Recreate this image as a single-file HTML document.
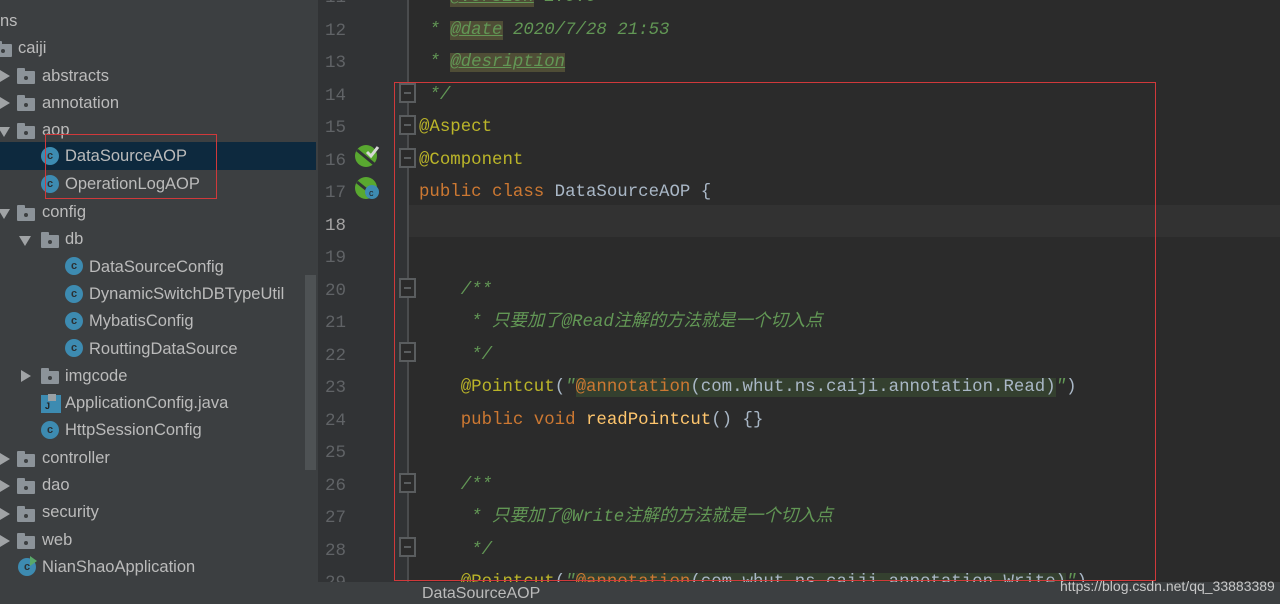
<!DOCTYPE html>
<html><head><meta charset="utf-8"><style>
*{margin:0;padding:0;box-sizing:border-box}
body{width:1280px;height:604px;overflow:hidden;background:#2b2b2b;position:relative;font-family:"Liberation Sans","Noto Sans CJK SC",sans-serif}
#side{position:absolute;left:0;top:0;width:318px;height:604px;background:#3c3f41}
.r{position:absolute;height:27px;line-height:27px;font-size:16.5px;color:#bbbbbb;white-space:nowrap}
.sel{position:absolute;left:0;top:142px;width:316px;height:28px;background:#0d293e}
.fold{position:absolute;width:18px;height:13px;background:#8c9399;border-radius:1px}
.fold:before{content:"";position:absolute;left:0;top:-3px;width:8px;height:4px;background:#8c9399;border-radius:1px 1px 0 0}
.fold:after{content:"";position:absolute;left:7px;top:5px;width:4px;height:4px;background:#3c3f41;border-radius:50%}
.arr{position:absolute;width:0;height:0}
.ar{border-top:6px solid transparent;border-bottom:6px solid transparent;border-left:10px solid #a0a3a5}
.ad{border-left:6px solid transparent;border-right:6px solid transparent;border-top:10px solid #a0a3a5}
.ci{position:absolute;width:18px;height:18px;border-radius:50%;background:#3d8bb1;color:#2b3033;font-size:11px;line-height:18px;text-align:center;font-weight:bold}
#gut{position:absolute;left:318px;top:0;width:90px;height:582px;background:#313335}
.ln{position:absolute;left:318px;width:28px;text-align:right;font-family:"Liberation Mono",monospace;font-size:17.5px;color:#606366;height:32.5px;line-height:32.5px}
.cl{position:absolute;left:419px;height:32.5px;line-height:32.5px;font-family:"Liberation Mono","Noto Sans CJK SC",monospace;font-size:17.4px;white-space:pre;color:#a9b7c6}
.cm{color:#629755;font-style:italic}
.tg{color:#629755;font-style:italic;text-decoration:underline;background:#4f4d36}
.an{color:#bbb529}
.kw{color:#cc7832}
.mt{color:#ffc66d}
.inj{background:#34402f}
.fm{position:absolute;left:399px;width:17px;height:20px;border:2px solid #5a5d5f;background:#2b2b2b}
.fm:after{content:"";position:absolute;left:3px;top:7px;width:7px;height:2px;background:#5a5d5f}
</style></head><body>
<div id="side">
<div class="sel"></div>
<div class="r" style="left:0;top:8px">ns</div>
<div class="fold" style="left:-6px;top:44px"></div><div class="r" style="left:18px;top:35px">caiji</div>
<div class="arr ar" style="left:0;top:70px"></div><div class="fold" style="left:17px;top:71px"></div><div class="r" style="left:42px;top:63px">abstracts</div>
<div class="arr ar" style="left:0;top:97px"></div><div class="fold" style="left:17px;top:98px"></div><div class="r" style="left:42px;top:90px">annotation</div>
<div class="arr ad" style="left:-2px;top:127px"></div><div class="fold" style="left:17px;top:126px"></div><div class="r" style="left:42px;top:117px">aop</div>
<div class="ci" style="left:41px;top:147px">c</div><div class="r" style="left:65px;top:143px">DataSourceAOP</div>
<div class="ci" style="left:41px;top:175px">c</div><div class="r" style="left:65px;top:171px">OperationLogAOP</div>
<div class="arr ad" style="left:-2px;top:209px"></div><div class="fold" style="left:17px;top:208px"></div><div class="r" style="left:42px;top:199px">config</div>
<div class="arr ad" style="left:19px;top:236px"></div><div class="fold" style="left:41px;top:235px"></div><div class="r" style="left:65px;top:226px">db</div>
<div class="ci" style="left:65px;top:257px">c</div><div class="r" style="left:89px;top:254px">DataSourceConfig</div>
<div class="ci" style="left:65px;top:285px">c</div><div class="r" style="left:89px;top:281px">DynamicSwitchDBTypeUtil</div>
<div class="ci" style="left:65px;top:312px">c</div><div class="r" style="left:89px;top:308px">MybatisConfig</div>
<div class="ci" style="left:65px;top:339px">c</div><div class="r" style="left:89px;top:336px">RouttingDataSource</div>
<div class="arr ar" style="left:21px;top:370px"></div><div class="fold" style="left:41px;top:371px"></div><div class="r" style="left:65px;top:363px">imgcode</div>
<div style="position:absolute;left:41px;top:395px;width:20px;height:18px;background:#3d8bb1;font-size:9px;color:#222;font-weight:bold;padding:6px 0 0 4px">J</div><div style="position:absolute;left:48px;top:394px;width:8px;height:7px;background:#9aa0a4"></div><div class="r" style="left:65px;top:390px">ApplicationConfig.java</div>
<div class="ci" style="left:41px;top:421px">c</div><div class="r" style="left:65px;top:417px">HttpSessionConfig</div>
<div class="arr ar" style="left:0;top:453px"></div><div class="fold" style="left:17px;top:454px"></div><div class="r" style="left:42px;top:445px">controller</div>
<div class="arr ar" style="left:0;top:480px"></div><div class="fold" style="left:17px;top:481px"></div><div class="r" style="left:42px;top:472px">dao</div>
<div class="arr ar" style="left:0;top:508px"></div><div class="fold" style="left:17px;top:509px"></div><div class="r" style="left:42px;top:499px">security</div>
<div class="arr ar" style="left:0;top:535px"></div><div class="fold" style="left:17px;top:536px"></div><div class="r" style="left:42px;top:527px">web</div>
<div class="ci" style="left:18px;top:558px">c</div><div style="position:absolute;left:30px;top:556px;border-top:5px solid transparent;border-bottom:5px solid transparent;border-left:7px solid #59a869"></div><div class="r" style="left:42px;top:554px">NianShaoApplication</div>
<div style="position:absolute;left:305px;top:275px;width:11px;height:195px;background:#4e5254"></div>
<div style="position:absolute;left:45px;top:134px;width:172px;height:65px;border:1.5px solid #d0393b"></div>
</div>
<div id="gut"></div>
<div style="position:absolute;left:408px;top:205px;width:872px;height:32px;background:#323232"></div>
<div style="position:absolute;left:407px;top:0;width:2px;height:582px;background:#4a4c4e"></div>
<div class="ln" style="top:-17.75px">11</div><div class="ln" style="top:14.75px">12</div><div class="ln" style="top:47.25px">13</div><div class="ln" style="top:79.75px">14</div><div class="ln" style="top:112.25px">15</div><div class="ln" style="top:144.75px">16</div><div class="ln" style="top:177.25px">17</div><div class="ln" style="top:209.75px;color:#a4a3a3">18</div><div class="ln" style="top:242.25px">19</div><div class="ln" style="top:274.75px">20</div><div class="ln" style="top:307.25px">21</div><div class="ln" style="top:339.75px">22</div><div class="ln" style="top:372.25px">23</div><div class="ln" style="top:404.75px">24</div><div class="ln" style="top:437.25px">25</div><div class="ln" style="top:469.75px">26</div><div class="ln" style="top:502.25px">27</div><div class="ln" style="top:534.75px">28</div><div class="ln" style="top:567.25px">29</div>
<svg style="position:absolute;left:354px;top:144px" width="28" height="60"><circle cx="12" cy="12" r="11" fill="#59a830"/><path d="M3 6 L20 20" stroke="#313335" stroke-width="3"/><path d="M13 8 l4 4 l7 -9" stroke="#d8d8d8" stroke-width="3" fill="none"/><circle cx="12" cy="44" r="11" fill="#59a830"/><path d="M3 38 L18 50" stroke="#313335" stroke-width="3"/><circle cx="18" cy="48" r="7" fill="#3d8bb1"/><text x="15" y="52" font-size="9" fill="#222" font-family="Liberation Sans">c</text></svg>
<div class="fm" style="top:83px"></div><div class="fm" style="top:115px"></div><div class="fm" style="top:148px"></div>
<div class="fm" style="top:278px"></div><div class="fm" style="top:342px"></div><div class="fm" style="top:473px"></div><div class="fm" style="top:537px"></div>
<div class="cl cm" style="top:-17.75px">   <span class="tg">@version</span> 1.0.0</div>
<div class="cl cm" style="top:14.75px"> * <span class="tg">@date</span> 2020/7/28 21:53</div>
<div class="cl cm" style="top:47.25px"> * <span class="tg">@desription</span></div>
<div class="cl cm" style="top:79.75px"> */</div>
<div class="cl an" style="top:112.25px">@Aspect</div>
<div class="cl an" style="top:144.75px">@Component</div>
<div class="cl" style="top:177.25px"><span class="kw">public class</span> DataSourceAOP {</div>
<div class="cl cm" style="top:274.75px">    /**</div>
<div class="cl cm" style="top:307.25px">     * 只要加了@Read注解的方法就是一个切入点</div>
<div class="cl cm" style="top:339.75px">     */</div>
<div class="cl" style="top:372.25px">    <span class="an">@Pointcut</span>(<span class="cm">"</span><span class="inj"><span class="kw">@annotation</span>(com.whut.ns.caiji.annotation.Read)</span><span class="cm">"</span>)</div>
<div class="cl" style="top:404.75px">    <span class="kw">public void</span> <span class="mt">readPointcut</span>() {}</div>
<div class="cl cm" style="top:469.75px">    /**</div>
<div class="cl cm" style="top:502.25px">     * 只要加了@Write注解的方法就是一个切入点</div>
<div class="cl cm" style="top:534.75px">     */</div>
<div class="cl" style="top:567.25px">    <span class="an">@Pointcut</span>(<span class="cm">"</span><span class="inj"><span class="kw">@annotation</span>(com.whut.ns.caiji.annotation.Write)</span><span class="cm">"</span>)</div>
<div style="position:absolute;left:394px;top:82px;width:762px;height:499px;border:1.5px solid #d0393b"></div>
<div style="position:absolute;left:318px;top:582px;width:962px;height:22px;background:#3c3f41"></div>
<div style="position:absolute;left:422px;top:585px;font-size:16px;color:#bbbbbb">DataSourceAOP</div>
<div style="position:absolute;left:1060px;top:578px;font-size:14px;color:#c8c8c8">https://blog.csdn.net/qq_33883389</div>
</body></html>
